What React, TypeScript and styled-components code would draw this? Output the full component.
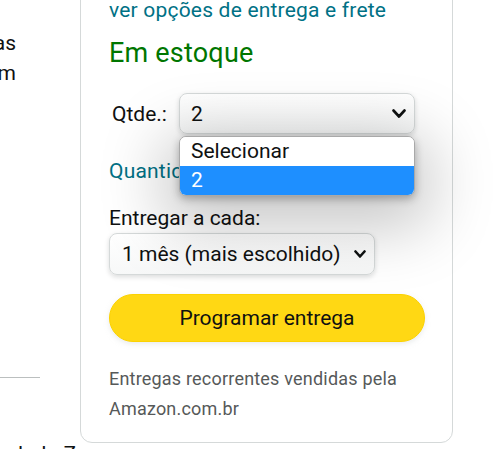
import React from "react";
import styled, { createGlobalStyle } from "styled-components";

const GlobalStyle = createGlobalStyle`
  html, body {
    margin: 0;
    padding: 0;
    background: #ffffff;
  }
  body {
    width: 500px;
    height: 449px;
    overflow: hidden;
    font-family: Roboto, "Noto Sans", Arial, sans-serif;
    color: #0f1111;
  }
  * { box-sizing: border-box; }
`;

const Page = styled.div`
  display: flex;
  align-items: flex-start;
  width: 500px;
  height: 449px;
  overflow: hidden;
`;

const LeftCol = styled.div`
  width: 80px;
  flex-shrink: 0;
  display: flex;
  flex-direction: column;
`;

const LeftText = styled.div`
  width: 16px;
  margin-top: 28px;
  font-size: 21px;
  line-height: 30px;
  color: #0f1111;
`;

const LeftLine = styled.div`
  display: flex;
  justify-content: flex-end;
  white-space: nowrap;
`;

const Divider = styled.hr`
  width: 40px;
  height: 1px;
  margin: 289px 0 0 0;
  border: 0;
  background: #bbbfbf;
`;

const BottomText = styled.div`
  margin-top: 61px;
  padding-left: 18px;
  font-size: 21px;
  line-height: 30px;
  white-space: nowrap;
  color: #0f1111;
`;

const Card = styled.section`
  width: 373px;
  flex-shrink: 0;
  margin-top: -40px;
  padding: 34px 27px 18px 28px;
  border: 1px solid #d5d9d9;
  border-radius: 12px;
  display: flex;
  flex-direction: column;
`;

const LinkText = styled.div<{ $mt?: number }>`
  margin-top: ${(p) => p.$mt ?? 0}px;
  font-size: 21px;
  line-height: 30px;
  letter-spacing: 0.2px;
  color: #007185;
  white-space: nowrap;
`;

const Stock = styled.div`
  margin-top: 10px;
  font-size: 27px;
  line-height: 36px;
  letter-spacing: 0.2px;
  color: #007600;
`;

const QtyRow = styled.div`
  margin-top: 22px;
  display: flex;
  align-items: center;
  position: relative;
`;

const QtyLabel = styled.span`
  width: 70px;
  padding-left: 3px;
  font-size: 21px;
  line-height: 30px;
`;

const SelectBox = styled.div<{ $w: number; $h: number; $pl: number }>`
  width: ${(p) => p.$w}px;
  height: ${(p) => p.$h}px;
  padding: 0 8px 0 ${(p) => p.$pl}px;
  display: flex;
  align-items: center;
  justify-content: space-between;
  background: linear-gradient(#ffffff, #f7f8f8);
  border: 1px solid #d5d9d9;
  border-radius: 8px;
  box-shadow: 0 2px 5px rgba(15, 17, 17, 0.15);
  font-size: 21px;
  line-height: 30px;
  color: #0f1111;
  white-space: nowrap;
`;

const Popup = styled.div`
  position: absolute;
  left: 70px;
  top: 43px;
  width: 236px;
  background: #ffffff;
  border: 1px solid #a9a9a9;
  border-radius: 7px;
  overflow: hidden;
  box-shadow: 0 16px 64px 16px rgba(0, 0, 0, 0.22), 0 3px 8px rgba(0, 0, 0, 0.28);
  z-index: 5;
`;

const Option = styled.div<{ $active?: boolean }>`
  height: 29px;
  padding-left: 11px;
  font-size: 21px;
  line-height: 29px;
  background: ${(p) => (p.$active ? "#1e8fff" : "#ffffff")};
  color: ${(p) => (p.$active ? "#ffffff" : "#0f1111")};
`;

const FieldLabel = styled.div`
  margin-top: 17px;
  font-size: 21px;
  line-height: 30px;
  color: #0f1111;
`;

const Primary = styled.button`
  margin-top: 19px;
  width: 316px;
  height: 48px;
  border: 1px solid #fcd200;
  border-radius: 24px;
  background: #ffd814;
  box-shadow: 0 2px 5px rgba(213, 217, 217, 0.5);
  font-family: inherit;
  font-size: 21px;
  line-height: 30px;
  color: #0f1111;
  padding: 0;
`;

const SmallText = styled.p`
  margin: 22px 0 0 0;
  font-size: 18px;
  line-height: 30px;
  letter-spacing: 0.2px;
  color: #565959;
`;

const Chevron = ({ w, h }: { w: number; h: number }) => (
  <svg width={w} height={h} viewBox={`0 0 ${w} ${h}`} fill="none">
    <path
      d={`M1.5 1.5 L${w / 2} ${h - 1.5} L${w - 1.5} 1.5`}
      stroke="#0f1111"
      strokeWidth={2.6}
      strokeLinecap="round"
      strokeLinejoin="round"
    />
  </svg>
);

export default function App() {
  return (
    <>
      <GlobalStyle />
      <Page>
        <LeftCol>
          <LeftText>
            <LeftLine>fotos e vídeos com as melhores ofertas</LeftLine>
            <LeftLine>disponível para Prime e também em</LeftLine>
          </LeftText>
          <Divider />
          <BottomText>lado Zoom</BottomText>
        </LeftCol>
        <Card>
          <LinkText>ver opções de entrega e frete</LinkText>
          <Stock>Em estoque</Stock>
          <QtyRow>
            <QtyLabel>Qtde.:</QtyLabel>
            <SelectBox $w={236} $h={41} $pl={11}>
              <span>2</span>
              <Chevron w={14} h={9} />
            </SelectBox>
            <Popup>
              <Option>Selecionar</Option>
              <Option $active>2</Option>
            </Popup>
          </QtyRow>
          <LinkText $mt={22}>Quantidade máxima por pedido</LinkText>
          <FieldLabel>Entregar a cada:</FieldLabel>
          <SelectBox $w={266} $h={42} $pl={12}>
            <span>1 mês (mais escolhido)</span>
            <Chevron w={12} h={8} />
          </SelectBox>
          <Primary>Programar entrega</Primary>
          <SmallText>
            Entregas recorrentes vendidas pela
            <br />
            Amazon.com.br
          </SmallText>
        </Card>
      </Page>
    </>
  );
}
